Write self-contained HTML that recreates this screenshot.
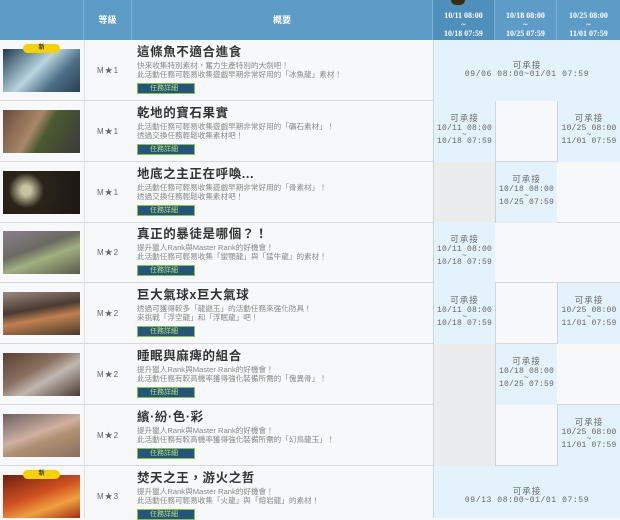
<!DOCTYPE html>
<html><head><meta charset="utf-8"><style>
*{margin:0;padding:0;box-sizing:border-box}
body{width:620px;height:518px;overflow:hidden;background:#f7f8f9;font-family:"Liberation Sans","Noto Sans CJK TC",sans-serif;position:relative}
.hd{position:absolute;top:0;height:40px;background:#5d9cc6;color:#fff;font-weight:bold;font-size:9px;text-align:center;border-right:1px solid #7fb3d5}
.hd.d{font-size:8px;line-height:9px;padding-top:11px;font-family:"Liberation Serif","Noto Serif CJK SC",serif}
.row{position:absolute;left:0;width:620px;height:61px;border-bottom:1px solid #d3d8dc}
.img{position:absolute;left:3px;top:9px;width:77px;height:43px}
.badge{position:absolute;left:23px;top:4px;width:37px;height:9px;background:#f6d200;border-radius:5px;font-size:6px;text-align:center;line-height:9px;color:#333;font-weight:bold}
.vl{position:absolute;left:84px;top:0;width:1px;height:61px;background:#dde1e5}
.lv{position:absolute;left:84px;width:48px;top:25px;text-align:center;font-size:8px;color:#666;letter-spacing:1px}
.t{position:absolute;left:137px;top:5px;font-size:12.5px;line-height:14px;font-weight:bold;color:#333;white-space:nowrap;letter-spacing:.6px}
.ds{position:absolute;left:137px;top:21px;font-size:7.6px;line-height:9px;color:#888;white-space:nowrap}
.bt{position:absolute;left:137px;top:43px;width:58px;height:11px;background:#24557a;border:1px solid #8bc34a;color:#b8e07a;font-size:7px;line-height:9px;padding-left:12px}
.c{position:absolute;top:0;height:61px;border-left:1px solid #c9d6e0}
.on{background:#e4f2fb;text-align:center;color:#666;font-size:8px;line-height:6.5px;padding-top:14px;font-family:"Liberation Mono",monospace;letter-spacing:.2px}
.on b{font-weight:normal;font-family:"Liberation Sans","Noto Sans CJK TC",sans-serif;font-size:8.5px;display:block;line-height:11px;margin-top:-2px;margin-bottom:2px;letter-spacing:1px}
.on.w{line-height:10px;padding-top:20px;letter-spacing:.6px}
.on.w b{margin:0;line-height:10px}
.gr{background:#eaeced}
</style></head><body>
<div class="hd" style="left:0;width:84px"></div>
<div class="hd" style="left:84px;width:48px;line-height:40px">等級</div>
<div class="hd" style="left:132px;width:301px;line-height:40px">概要</div>
<div class="hd d" style="left:433px;width:62px;background:#4f8fbb">10/11 08:00<br>~<br>10/18 07:59</div>
<div class="hd d" style="left:495px;width:62px">10/18 08:00<br>~<br>10/25 07:59</div>
<div class="hd d" style="left:557px;width:63px;border-right:0">10/25 08:00<br>~<br>11/01 07:59</div>
<div style="position:absolute;left:451px;top:0;width:14px;height:5px;background:#3a2a10;border-radius:0 0 6px 6px"></div>

<div class="row" style="top:40px"><div class="img" style="background:linear-gradient(135deg,#1e3a4e,#b9d3df 45%,#4c6e86 70%,#2a3e52)"></div><div class="badge">新</div><div class="vl"></div><div class="lv">M★1</div>
<div class="t">這條魚不適合進食</div><div class="ds">快來收集特別素材，奮力生產特別的大劍吧！<br>此活動任務可輕易收集遊戲早期非常好用的「冰魚龍」素材！</div><div class="bt">任務詳細</div>
<div class="c on w" style="left:433px;width:187px"><b>可承接</b>09/06 08:00~01/01 07:59</div></div>

<div class="row" style="top:101px"><div class="img" style="background:linear-gradient(120deg,#6a4a3a,#a88868 40%,#4a5a30 55%,#3a3a3a)"></div><div class="vl"></div><div class="lv">M★1</div>
<div class="t">乾地的寶石果實</div><div class="ds">此活動任務可輕易收集遊戲早期非常好用的「礦石素材」！<br>透過交換任務輕鬆收集素材吧！</div><div class="bt">任務詳細</div>
<div class="c on" style="left:433px;width:62px"><b>可承接</b>10/11 08:00<br>~<br>10/18 07:59</div>
<div class="c" style="left:495px;width:62px"></div>
<div class="c on" style="left:557px;width:63px"><b>可承接</b>10/25 08:00<br>~<br>11/01 07:59</div></div>

<div class="row" style="top:162px"><div class="img" style="background:radial-gradient(circle at 30% 45%,#c8c4a0 8%,#2a2418 30%,#1c1812)"></div><div class="vl"></div><div class="lv">M★1</div>
<div class="t">地底之主正在呼喚...</div><div class="ds">此活動任務可輕易收集遊戲早期非常好用的「骨素材」！<br>透過交換任務輕鬆收集素材吧！</div><div class="bt">任務詳細</div>
<div class="c gr" style="left:433px;width:62px"></div>
<div class="c on" style="left:495px;width:62px"><b>可承接</b>10/18 08:00<br>~<br>10/25 07:59</div></div>

<div class="row" style="top:222px"><div class="img" style="background:linear-gradient(160deg,#8a8090,#6a6a60 40%,#a0b080 60%,#5a5a48)"></div><div class="vl"></div><div class="lv">M★2</div>
<div class="t">真正的暴徒是哪個？！</div><div class="ds">提升獵人Rank與Master Rank的好機會！<br>此活動任務可輕易收集「蠻顎龍」與「猛牛龍」的素材！</div><div class="bt">任務詳細</div>
<div class="c on" style="left:433px;width:62px"><b>可承接</b>10/11 08:00<br>~<br>10/18 07:59</div></div>

<div class="row" style="top:283px"><div class="img" style="background:linear-gradient(170deg,#9a8a80,#4a3a30 40%,#c08050 60%,#4a3a2a)"></div><div class="vl"></div><div class="lv">M★2</div>
<div class="t">巨大氣球x巨大氣球</div><div class="ds">透過可獲得較多「龍謎玉」的活動任務來強化防具！<br>來挑戰「浮空龍」和「浮眠龍」吧！</div><div class="bt">任務詳細</div>
<div class="c on" style="left:433px;width:62px"><b>可承接</b>10/11 08:00<br>~<br>10/18 07:59</div>
<div class="c" style="left:495px;width:62px"></div>
<div class="c on" style="left:557px;width:63px"><b>可承接</b>10/25 08:00<br>~<br>11/01 07:59</div></div>

<div class="row" style="top:344px"><div class="img" style="background:linear-gradient(150deg,#5a4030,#8a7060 40%,#c0b8b0 60%,#4a3a30)"></div><div class="vl"></div><div class="lv">M★2</div>
<div class="t">睡眠與麻痺的組合</div><div class="ds">提升獵人Rank與Master Rank的好機會！<br>此活動任務有較高機率獲得強化裝備所需的「傀異骨」！</div><div class="bt">任務詳細</div>
<div class="c gr" style="left:433px;width:62px"></div>
<div class="c on" style="left:495px;width:62px"><b>可承接</b>10/18 08:00<br>~<br>10/25 07:59</div></div>

<div class="row" style="top:405px"><div class="img" style="background:linear-gradient(160deg,#6a6060,#d0b0a0 45%,#b09070 60%,#8a7060)"></div><div class="vl"></div><div class="lv">M★2</div>
<div class="t">繽·紛·色·彩</div><div class="ds">提升獵人Rank與Master Rank的好機會！<br>此活動任務有較高機率獲得強化裝備所需的「幻鳥龍玉」！</div><div class="bt">任務詳細</div>
<div class="c gr" style="left:433px;width:62px"></div>
<div class="c" style="left:495px;width:62px"></div>
<div class="c on" style="left:557px;width:63px"><b>可承接</b>10/25 08:00<br>~<br>11/01 07:59</div></div>

<div class="row" style="top:466px;height:52px;border:0"><div class="img" style="background:linear-gradient(160deg,#6a2010,#d05020 45%,#f0a040 70%,#a03010)"></div><div class="badge">新</div><div class="vl" style="height:52px"></div><div class="lv">M★3</div>
<div class="t">焚天之王，游火之哲</div><div class="ds">提升獵人Rank與Master Rank的好機會！<br>此活動任務可輕易收集「火龍」與「熔岩龍」的素材！</div><div class="bt">任務詳細</div>
<div class="c on w" style="left:433px;width:187px;height:52px"><b>可承接</b>09/13 08:00~01/01 07:59</div></div>
</body></html>
